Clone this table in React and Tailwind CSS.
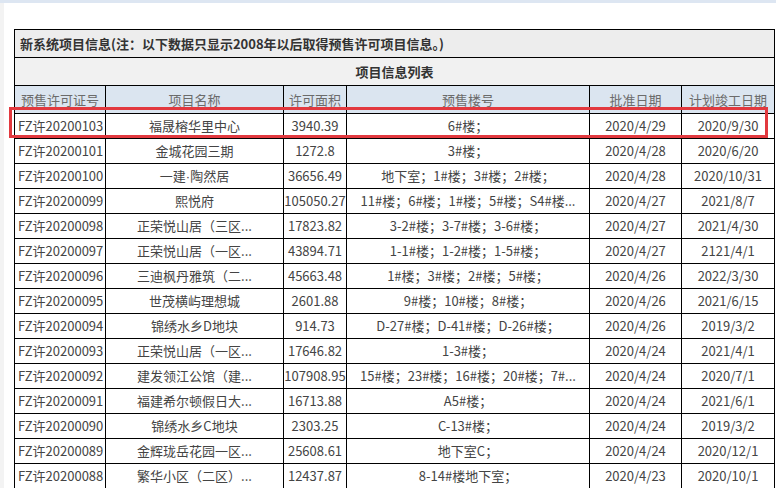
import React from 'react';

const dot = <span style={{ fontFamily: '"Liberation Sans", sans-serif' }}>·</span>;

const rows = [
  ['FZ许20200103', '福晟榕华里中心', '3940.39', '6#楼；', '2020/4/29', '2020/9/30'],
  ['FZ许20200101', '金城花园三期', '1272.8', '3#楼；', '2020/4/28', '2020/6/20'],
  ['FZ许20200100', <>一建{dot}陶然居</>, '36656.49', '地下室；1#楼；3#楼；2#楼；', '2020/4/28', '2020/10/31'],
  ['FZ许20200099', '熙悦府', '105050.27', '11#楼；6#楼；1#楼；5#楼；S4#楼...', '2020/4/27', '2021/8/7'],
  ['FZ许20200098', '正荣悦山居（三区...', '17823.82', '3-2#楼；3-7#楼；3-6#楼；', '2020/4/27', '2021/4/30'],
  ['FZ许20200097', '正荣悦山居（一区...', '43894.71', '1-1#楼；1-2#楼；1-5#楼；', '2020/4/27', '2121/4/1'],
  ['FZ许20200096', '三迪枫丹雅筑（二...', '45663.48', '1#楼；3#楼；2#楼；5#楼；', '2020/4/26', '2022/3/30'],
  ['FZ许20200095', '世茂横屿理想城', '2601.88', '9#楼；10#楼；8#楼；', '2020/4/26', '2021/6/15'],
  ['FZ许20200094', '锦绣水乡D地块', '914.73', 'D-27#楼；D-41#楼；D-26#楼；', '2020/4/26', '2019/3/2'],
  ['FZ许20200093', '正荣悦山居（一区...', '17646.82', '1-3#楼；', '2020/4/24', '2021/4/1'],
  ['FZ许20200092', '建发领江公馆（建...', '107908.95', '15#楼；23#楼；16#楼；20#楼；7#...', '2020/4/24', '2020/7/1'],
  ['FZ许20200091', '福建希尔顿假日大...', '16713.88', 'A5#楼；', '2020/4/24', '2021/6/1'],
  ['FZ许20200090', '锦绣水乡C地块', '2303.25', 'C-13#楼；', '2020/4/24', '2019/3/2'],
  ['FZ许20200089', '金辉珑岳花园一区...', '25608.61', '地下室C；', '2020/4/24', '2020/12/1'],
  ['FZ许20200088', '繁华小区（二区）...', '12437.87', '8-14#楼地下室；', '2020/4/23', '2020/10/1'],
];

const heads = ['预售许可证号', '项目名称', '许可面积', '预售楼号', '批准日期', '计划竣工日期'];

export default function App() {
  return (
    <div
      className="relative w-[776px] h-[488px] overflow-hidden bg-white border-t-[3px] border-t-[#dde6f2]"
      style={{ fontFamily: '"Microsoft YaHei", "Noto Sans CJK SC", sans-serif' }}
    >
      <div className="flex h-full">
        <div className="w-[4px] shrink-0 bg-[#f3f3f3]" />
        <div className="pl-[10px] pt-[26px]">
          <table className="table-fixed border-collapse w-[760px] text-[13px] text-[#444]">
            <colgroup>
              <col className="w-[91px]" />
              <col className="w-[178px]" />
              <col className="w-[63px]" />
              <col className="w-[243px]" />
              <col className="w-[92px]" />
              <col className="w-[93px]" />
            </colgroup>
            <tbody>
              <tr>
                <td colSpan={6} className="h-[28px] border border-black bg-[#ededed] px-[5px] font-bold text-[#333]">
                  新系统项目信息(注：以下数据只显示2008年以后取得预售许可项目信息。)
                </td>
              </tr>
              <tr>
                <td colSpan={6} className="h-[28px] border border-black bg-[#f1f1f1] text-center font-bold text-[#333]">
                  项目信息列表
                </td>
              </tr>
              <tr>
                {heads.map((h) => (
                  <td key={h} className="h-[28px] border border-black bg-[#dbe5f0] text-center text-[#6b6b6b] whitespace-nowrap">
                    {h}
                  </td>
                ))}
              </tr>
              {rows.map((r) => (
                <tr key={r[0]}>
                  {r.map((c, i) => (
                    <td
                      key={i}
                      className={
                        i === 0
                          ? 'h-[25px] border border-black pl-[3px] text-left whitespace-nowrap overflow-hidden'
                          : 'h-[25px] border border-black text-center whitespace-nowrap overflow-hidden'
                      }
                    >
                      {c}
                    </td>
                  ))}
                </tr>
              ))}
            </tbody>
          </table>
        </div>
      </div>
      <div className="absolute left-[9px] top-[104px] w-[759px] h-[31px] border-[3px] border-[#e2393f]" />
    </div>
  );
}
